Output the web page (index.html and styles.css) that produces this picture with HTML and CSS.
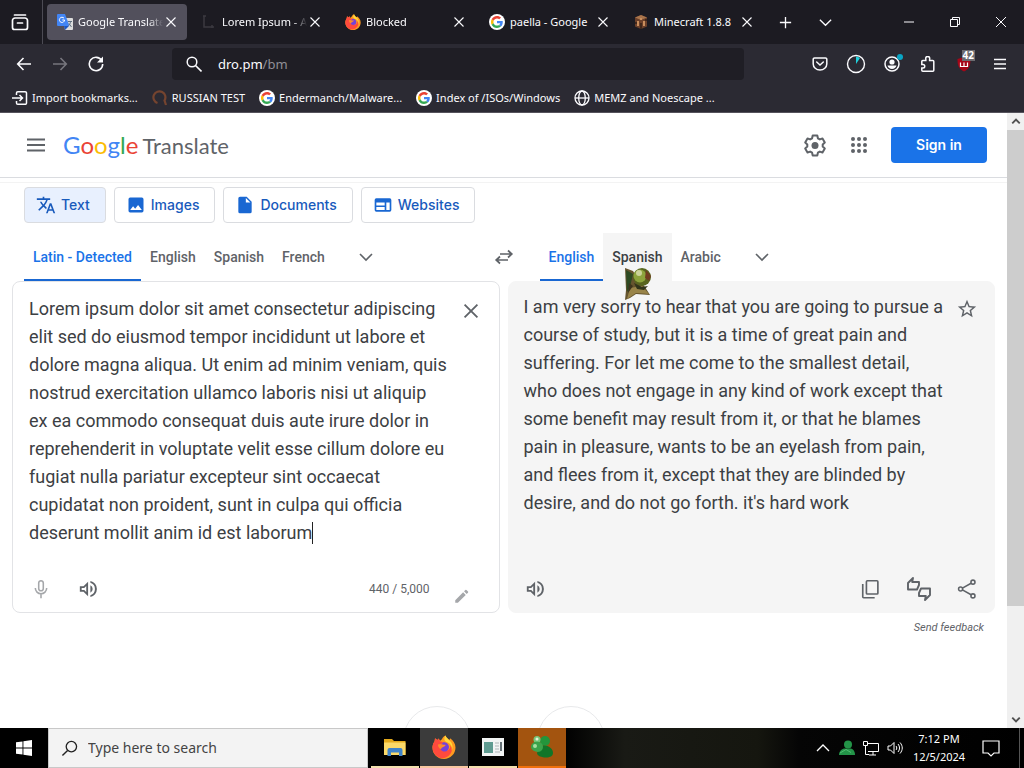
FILE: index.html
```html
<!DOCTYPE html>
<html lang="en">
<head>
<meta charset="utf-8">
<meta name="viewport" content="width=device-width, initial-scale=1">
<title>Google Translate</title>
<link rel="stylesheet" href="styles.css">
</head>
<body>
<svg class="sprite" aria-hidden="true">
  <symbol id="close" viewBox="0 0 16 16"><path d="M3.5 3.5l9 9M12.5 3.5l-9 9" fill="none" stroke="currentColor" stroke-width="1.1"/></symbol>
  <symbol id="chev" viewBox="0 0 16 16"><path d="M2 5l6 6 6-6" fill="none" stroke="currentColor" stroke-width="1.6"/></symbol>
  <symbol id="arrow" viewBox="0 0 16 16"><path d="M2 5l6 6 6-6" fill="none" stroke="currentColor" stroke-width="3"/></symbol>
  <symbol id="google" viewBox="0 0 48 48"><circle cx="24" cy="24" r="24" fill="#fff"/><g transform="translate(6 6) scale(.75)"><path fill="#EA4335" d="M24 9.5c3.54 0 6.71 1.22 9.21 3.6l6.85-6.85C35.9 2.38 30.47 0 24 0 14.62 0 6.51 5.38 2.56 13.22l7.98 6.19C12.43 13.72 17.74 9.5 24 9.5z"/><path fill="#4285F4" d="M46.98 24.55c0-1.57-.15-3.09-.38-4.55H24v9.02h12.94c-.58 2.96-2.26 5.48-4.78 7.18l7.73 6c4.51-4.18 7.09-10.36 7.09-17.65z"/><path fill="#FBBC05" d="M10.53 28.59c-.48-1.45-.76-2.99-.76-4.59s.27-3.14.76-4.59l-7.98-6.19C.92 16.46 0 20.12 0 24c0 3.88.92 7.54 2.56 10.78l7.97-6.19z"/><path fill="#34A853" d="M24 48c6.48 0 11.93-2.13 15.89-5.81l-7.73-6c-2.15 1.45-4.92 2.3-8.16 2.3-6.26 0-11.57-4.22-13.47-9.91l-7.98 6.19C6.51 42.62 14.62 48 24 48z"/></g></symbol>
  <symbol id="firefox" viewBox="0 0 24 24"><path fill="#ff9a1f" d="M13.6.4c.5 2.2 2.3 3.2 3.5 4.6 1-.6.9-1.800.9-1.800 3.200 2 5.500 5.400 5.500 9.400C23.500 18.900 18.400 24 12 24S.5 18.900.5 12.700c0-2.500.8-4.700 2.100-6.500l.4-3 2.300 1.900 1.500-1.600.9 2.100c2.600-.4 2.400-4 5.900-5.200z"/><path fill="#ff4a3d" d="M.5 12C1 8 2.600 6.700 2.600 6.200L3 3.200l2.300 1.900 1.500-1.600 1 2.800 3.400.9-3.400 3.100c.2 4.500 3.600 6.500 7 5.500 2.600-.8 3.800-3 3.600-5.200 2 2 2 5.400.1 8.100C15.500 23 10 24.500 6 22 2.300 20 .3 16 .5 12z"/><path fill="#ffd83b" d="M13.600.4c.5 2.200 2.300 3.200 3.500 4.600 3.300 3 4.300 6.600 2.700 10.400.4-3.900-.8-6.600-4-7.800-2-.8-3.400-1.700-3.400-3.600 0-1.500.5-2.800 1.200-3.600z"/><path fill="#7542d8" d="M7.800 10.300c.7-1.200 2.400-1.500 3.400-3.100 3.200-.4 5.800 1.900 5.800 4.900 0 2.600-1.900 4.500-4.500 4.500-3 0-4.900-2.700-4.700-6.300z"/><path fill="#ff8a2b" d="M6 9.500c2-1 3.300-.6 4.900.1 1 .4 2 .1 2.700.3-.6 1.500-2.100 1.800-3.300 2.600-.5.400-1.200.9-1.300 1.800C7 13.500 5.800 11.500 6 9.500z"/></symbol>
  <symbol id="speaker" viewBox="0 0 24 24"><path fill="currentColor" fill-rule="evenodd" d="M2 9v6h4l5 5V4L6 9H2zm7-.2v6.400L6.800 13H4v-2h2.800L9 8.800zM16 12a4.500 4.500 0 0 0-2.500-4v8a4.500 4.500 0 0 0 2.500-4zm-2.500-8.800v2.100a7 7 0 0 1 0 13.400v2.100a9 9 0 0 0 0-17.600z"/></symbol>
</svg>

<div class="chrome">
  <div class="tabbar">
    <button class="cbtn history" aria-label="Recent browsing"><svg viewBox="0 0 18 18"><path d="M3.500 2h11M1.500 7.500v7a2 2 0 0 0 2 2h11a2 2 0 0 0 2-2v-7A2.500 2.500 0 0 0 14 5H4a2.500 2.500 0 0 0-2.500 2.500zM6.500 10h5" fill="none" stroke="currentColor" stroke-width="1.700" stroke-linecap="round"/></svg></button>
    <div class="tabs">
      <div class="tab active"><svg class="fav" viewBox="0 0 16 16"><path d="M6 4h9a1 1 0 0 1 1 1v10a1 1 0 0 1-1 1H8z" fill="#dcdcdc"/><path d="M1 0h7l4.500 12H1a1 1 0 0 1-1-1V1a1 1 0 0 1 1-1z" fill="#4285f4"/><path d="M8 16l4-4H7z" fill="#1a56c4"/><path d="M7 4.200A2.600 2.600 0 1 0 7.600 6H5.300" fill="none" stroke="#fff" stroke-width="1"/><path d="M11 7.500h4M13.500 7.500c0 2-1 3-2 4M12 9.500l2.500 3.500" fill="none" stroke="#607080"/></svg><span class="title">Google Translate</span><button aria-label="Close Google Translate"><svg><use href="#close"/></svg></button></div>
      <div class="tab"><svg class="fav" viewBox="0 0 16 16"><path d="M3 2v11h10M2 2h3M11 11v3" fill="none" stroke="#3b3a40" stroke-width="1.500"/></svg><span class="title">Lorem Ipsum - All</span><button aria-label="Close Lorem Ipsum"><svg><use href="#close"/></svg></button></div>
      <div class="tab"><svg class="fav"><use href="#firefox"/></svg><span class="title">Blocked</span><button aria-label="Close Blocked"><svg><use href="#close"/></svg></button></div>
      <div class="tab"><svg class="fav"><use href="#google"/></svg><span class="title plain">paella - Google</span><button aria-label="Close paella"><svg><use href="#close"/></svg></button></div>
      <div class="tab"><svg class="fav" viewBox="0 0 16 16"><path d="M8 1l6 2.500v9L8 15l-6-2.500v-9z" fill="#6b402a"/><path d="M8 1l6 2.500L8 6 2 3.500z" fill="#a9754c"/><path d="M4 7h2v5H4zM10 7h2v5h-2zM7 4h2v2H7z" fill="#c98e5d"/><path d="M2 8h2v2H2zM7 9h2v6H7zM12 5h2v2h-2z" fill="#40271b"/></svg><span class="title plain">Minecraft 1.8.8</span><button aria-label="Close Minecraft"><svg><use href="#close"/></svg></button></div>
    </div>
    <button class="cbtn" aria-label="New tab"><svg viewBox="0 0 16 16"><path d="M8 2v12M2 8h12" stroke="currentColor" stroke-width="1.400"/></svg></button>
    <button class="cbtn" aria-label="List all tabs"><svg viewBox="0 0 16 16"><path d="M2 5l6 6 6-6" fill="none" stroke="currentColor" stroke-width="1.400"/></svg></button>
    <div class="winctl">
      <button aria-label="Minimize"><svg viewBox="0 0 12 12"><path d="M1 6h10" stroke="currentColor"/></svg></button>
      <button aria-label="Restore"><svg viewBox="0 0 12 12"><path d="M1.500 3.500h7v7h-7zM3.500 3V1.500h7v7H9" fill="none" stroke="currentColor"/></svg></button>
      <button aria-label="Close"><svg viewBox="0 0 12 12"><path d="M1 1l10 10M11 1L1 11" stroke="currentColor"/></svg></button>
    </div>
  </div>

  <div class="navbar">
    <div class="navleft">
      <button class="nbtn" aria-label="Back"><svg viewBox="0 0 16 16"><path d="M15 8H2M7.500 2L1.700 8l5.800 6" fill="none" stroke="currentColor" stroke-width="1.600"/></svg></button>
      <button class="nbtn off" aria-label="Forward" disabled><svg viewBox="0 0 16 16"><path d="M1 8h13M8.500 2l5.800 6-5.800 6" fill="none" stroke="currentColor" stroke-width="1.600"/></svg></button>
      <button class="nbtn" aria-label="Reload"><svg viewBox="0 0 16 16"><path d="M13.700 4.500A6.700 6.700 0 1 0 14.700 8" fill="none" stroke="currentColor" stroke-width="1.600"/><path d="M15 .5V6.500H9z" fill="currentColor"/></svg></button>
    </div>
    <div class="urlbar"><svg viewBox="0 0 16 16"><circle cx="6" cy="6" r="4.800" fill="none" stroke="currentColor" stroke-width="1.500"/><path d="M9.500 9.500l6 6" stroke="currentColor" stroke-width="1.600"/></svg><a href="#bm">dro.pm<span>/bm</span></a></div>
    <div class="navright">
      <button class="nbtn" aria-label="Save to Pocket"><svg viewBox="0 0 16 16"><path d="M2.500 2h11A1.300 1.300 0 0 1 14.800 3.300V8A6.800 6 0 0 1 1.200 8V3.300A1.300 1.300 0 0 1 2.500 2zM4.700 6L8 9l3.300-3" fill="none" stroke="currentColor" stroke-width="1.500" stroke-linecap="round"/></svg></button>
      <button class="nbtn wide" aria-label="Timer"><svg viewBox="0 0 20 20"><circle cx="10" cy="10" r="8.500" fill="none" stroke="currentColor" stroke-width="1.400"/><path d="M10 10V2.500a7 7 0 0 1 4 1.500z" fill="#20d0dc"/></svg></button>
      <button class="nbtn" aria-label="Account"><svg viewBox="0 0 16 16"><circle cx="8" cy="8" r="7" fill="none" stroke="currentColor" stroke-width="1.500"/><circle cx="8" cy="6" r="2.600" fill="currentColor"/><path d="M3.500 9.500h9c-.5 2-2.300 3.500-4.500 3.500S4 11.500 3.500 9.500z" fill="currentColor"/></svg><i class="dot"></i></button>
      <button class="nbtn" aria-label="Extensions"><svg viewBox="0 0 16 16"><path d="M1.800 8.500V5.500a1 1 0 0 1 1-1h3V3a2 2 0 1 1 3.800 0v1.500h3.200a1 1 0 0 1 1 1v8.700a1 1 0 0 1-1 1H2.800a1 1 0 0 1-1-1V12H3a1.700 1.700 0 0 0 0-3.500z" fill="none" stroke="currentColor" stroke-width="1.500"/></svg></button>
      <button class="nbtn" aria-label="Ad blocker, 42 blocked"><svg viewBox="0 0 16 16"><path d="M8 1l6.500 2c0 6-1 10-6.500 12.500C2.500 13 1.500 9 1.500 3z" fill="#a50618"/><path d="M4.500 6.500v4h7v-4M8 6.500v4" fill="none" stroke="#fff" stroke-width="1.200"/></svg><span class="badge">42</span></button>
      <button class="nbtn" aria-label="Application menu"><svg viewBox="0 0 16 16"><path d="M2 3.500h12M2 8h12M2 12.500h12" stroke="currentColor" stroke-width="1.400"/></svg></button>
    </div>
  </div>

  <nav class="bookmarks">
    <a href="#b1"><svg viewBox="0 0 16 16"><path d="M4.500 5V3a1.300 1.300 0 0 1 1.300-1.300h7.400A1.300 1.300 0 0 1 14.500 3v10a1.300 1.300 0 0 1-1.300 1.300H5.800A1.300 1.300 0 0 1 4.500 13v-2M0 8h10M7.500 5l3 3-3 3" fill="none" stroke="currentColor" stroke-width="1.500"/></svg>Import bookmarks...</a>
    <a href="#b2"><svg viewBox="0 0 16 16"><path d="M5.500 13A6 6 0 1 1 12.500 10.500L14 15" fill="none" stroke="#75442f" stroke-width="2.200"/></svg>RUSSIAN TEST</a>
    <a href="#b3"><svg><use href="#google"/></svg>Endermanch/Malware...</a>
    <a href="#b4"><svg><use href="#google"/></svg>Index of /ISOs/Windows</a>
    <a href="#b5"><svg viewBox="0 0 16 16"><g fill="none" stroke="currentColor" stroke-width="1.300"><circle cx="8" cy="8" r="7"/><ellipse cx="8" cy="8" rx="3.300" ry="7"/><path d="M1 8h14"/></g></svg>MEMZ and Noescape ...</a>
  </nav>
</div>

<div class="viewport">
  <div class="page">
    <header class="header">
      <button class="ibtn" aria-label="Main menu"><svg viewBox="0 0 24 24"><path d="M3 6.500h18M3 12h18M3 17.500h18" stroke="currentColor" stroke-width="2"/></svg></button>
      <a class="logo" href="#home"><span class="g"><b class="bl">G</b><b class="rd">o</b><b class="yl">o</b><b class="bl">g</b><b class="gr">l</b><b class="rd">e</b></span><span>Translate</span></a>
      <div class="actions">
        <button class="ibtn" aria-label="Settings"><svg viewBox="0 0 24 24"><path d="M9.700 2.500h4.600l.6 2.800 1.900 1.100 2.700-.9 2.300 4-2.100 1.900v2.200l2.100 1.900-2.300 4-2.700-.9-1.900 1.100-.6 2.800H9.700l-.6-2.800-1.900-1.100-2.700.9-2.300-4 2.100-1.900v-2.200L2.200 9.500l2.300-4 2.700.9 1.900-1.100z" fill="none" stroke="currentColor" stroke-width="2" stroke-linejoin="round"/><circle cx="12" cy="12.500" r="3.500" fill="currentColor"/></svg></button>
        <button class="ibtn" aria-label="Google apps"><svg viewBox="0 0 24 24"><g fill="currentColor"><circle cx="6" cy="6" r="2"/><circle cx="12" cy="6" r="2"/><circle cx="18" cy="6" r="2"/><circle cx="6" cy="12" r="2"/><circle cx="12" cy="12" r="2"/><circle cx="18" cy="12" r="2"/><circle cx="6" cy="18" r="2"/><circle cx="12" cy="18" r="2"/><circle cx="18" cy="18" r="2"/></g></svg></button>
        <button class="signin">Sign in</button>
      </div>
    </header>

    <main class="main">
      <nav class="modes">
        <button class="on"><svg viewBox="0 0 24 24"><path fill="currentColor" d="M12.870 15.070l-2.540-2.510.03-.03A17.520 17.520 0 0 0 14.070 6H17V4h-7V2H8v2H1v2h11.170C11.500 7.920 10.440 9.750 9 11.350 8.070 10.320 7.300 9.190 6.690 8h-2c.73 1.630 1.730 3.170 2.980 4.560l-5.090 5.020L4 19l5-5 3.110 3.110.76-2.040zM18.500 10h-2L12 22h2l1.120-3h4.750L21 22h2l-4.500-12zm-2.620 7l1.620-4.330L19.120 17h-3.240z"/></svg>Text</button>
        <button><svg viewBox="0 0 24 24"><path fill="#1967d2" d="M21 19V5a2 2 0 0 0-2-2H5a2 2 0 0 0-2 2v14a2 2 0 0 0 2 2h14a2 2 0 0 0 2-2zM8.500 13.500l2.500 3.010L14.500 12l4.500 6H5l3.500-4.500z"/></svg>Images</button>
        <button><svg viewBox="0 0 24 24"><path fill="#1967d2" d="M6 2a2 2 0 0 0-2 2v16a2 2 0 0 0 2 2h12a2 2 0 0 0 2-2V8l-6-6H6zm7 7V3.500L18.500 9H13z"/></svg>Documents</button>
        <button><svg viewBox="0 0 24 24"><path fill="#1967d2" d="M20 4H4a2 2 0 0 0-2 2v12a2 2 0 0 0 2 2h16a2 2 0 0 0 2-2V6a2 2 0 0 0-2-2zm-6 14H4v-3.500h10V18zm0-5.500H4V9h10v3.500zm6 5.500h-4V9h4v9z"/></svg>Websites</button>
      </nav>

      <div class="langs">
        <div class="lang-group">
          <button class="lang on">Latin - Detected</button><button class="lang">English</button><button class="lang">Spanish</button><button class="lang">French</button>
          <button class="more" aria-label="More source languages"><svg><use href="#chev"/></svg></button>
        </div>
        <button class="swap" aria-label="Swap languages"><svg viewBox="0 0 20 20"><path d="M6 7h11.500M14 3.500L17.800 7 14 10.500M14 13H2.500M6 9.500L2.200 13 6 16.500" fill="none" stroke="currentColor" stroke-width="1.700"/></svg></button>
        <div class="lang-group">
          <button class="lang on">English</button><button class="lang hover">Spanish<svg class="cursor" viewBox="0 0 28 34"><path d="M1 2l8 3 5 8 7 8 5 8-14-1-6 4-5 2 1-10z" fill="#65542e"/><path d="M2 4l7 4-3 13-3 5z" fill="#2d4a22"/><path d="M6 22l12-2 7 8-13-1-9 6z" fill="#998449"/><path d="M5 17l4 3-5 7z" fill="#3d351d"/><circle cx="18" cy="11" r="9" fill="#58651f"/><circle cx="16" cy="10" r="6.500" fill="#8da43c"/><circle cx="15" cy="7" r="3" fill="#ccd49b"/><path d="M22 4l5 6-2 5-4-3z" fill="#713e20"/><path d="M10 17l8 4 6-1-4 4-7-1z" fill="#31351a"/></svg></button><button class="lang">Arabic</button>
          <button class="more" aria-label="More target languages"><svg><use href="#chev"/></svg></button>
        </div>
      </div>

      <div class="panels">
        <section class="panel source">
          <div class="top">
            <textarea aria-label="Source text" spellcheck="false">Lorem ipsum dolor sit amet consectetur adipiscing elit sed do eiusmod tempor incididunt ut labore et dolore magna aliqua. Ut enim ad minim veniam, quis nostrud exercitation ullamco laboris nisi ut aliquip ex ea commodo consequat duis aute irure dolor in reprehenderit in voluptate velit esse cillum dolore eu fugiat nulla pariatur excepteur sint occaecat cupidatat non proident, sunt in culpa qui officia deserunt mollit anim id est laborum</textarea>
            <i class="caret"></i>
            <button class="pbtn" aria-label="Clear source text"><svg viewBox="0 0 24 24"><path d="M5 5l14 14M19 5L5 19" stroke="currentColor" stroke-width="2"/></svg></button>
          </div>
          <div class="tools">
            <button class="pbtn dim" aria-label="Translate by voice"><svg viewBox="0 0 24 24"><path d="M12 3a2.500 2.500 0 0 0-2.500 2.500v6a2.500 2.500 0 0 0 5 0v-6A2.500 2.500 0 0 0 12 3zM5.800 11a6.200 6.200 0 0 0 12.400 0M12 17.500V22" fill="none" stroke="currentColor" stroke-width="1.700"/></svg></button>
            <button class="pbtn" aria-label="Listen to source text"><svg><use href="#speaker"/></svg></button>
            <span class="count">440 / 5,000</span>
            <button class="pbtn dim pencil" aria-label="Input tools"><svg viewBox="0 0 24 24"><path fill="currentColor" d="M3 17.500V21h3.500L17 10.500 13.500 7 3 17.500zM20 7.500a1 1 0 0 0 0-1.400L17.900 4a1 1 0 0 0-1.400 0l-1.800 1.800 3.500 3.500L20 7.500z"/></svg></button>
          </div>
        </section>
        <section class="panel target">
          <div class="top">
            <p>I am very sorry to hear that you are going to pursue a course of study, but it is a time of great pain and suffering. For let me come to the smallest detail, who does not engage in any kind of work except that some benefit may result from it, or that he blames pain in pleasure, wants to be an eyelash from pain, and flees from it, except that they are blinded by desire, and do not go forth. it's hard work</p>
            <button class="pbtn" aria-label="Save translation"><svg viewBox="0 0 24 24"><path fill="currentColor" d="M22 9.240l-7.190-.62L12 2 9.190 8.630 2 9.240l5.460 4.730L5.820 21 12 17.270 18.180 21l-1.630-7.030L22 9.240zM12 15.400l-3.760 2.270 1-4.280-3.320-2.880 4.380-.38L12 6.100l1.710 4.040 4.380.38-3.320 2.880 1 4.280L12 15.400z"/></svg></button>
          </div>
          <div class="tools">
            <button class="pbtn" aria-label="Listen to translation"><svg><use href="#speaker"/></svg></button>
            <div class="right">
              <button class="pbtn" aria-label="Copy translation"><svg viewBox="0 0 24 24"><path d="M8 3h10.500a1 1 0 0 1 1 1v12.500a1 1 0 0 1-1 1H8a1 1 0 0 1-1-1V4a1 1 0 0 1 1-1zM3 6.500V20.500a1 1 0 0 0 1 1h12" fill="none" stroke="currentColor" stroke-width="1.800"/></svg></button>
              <button class="pbtn big" aria-label="Rate translation"><svg viewBox="0 0 28 28"><g fill="none" stroke="currentColor" stroke-width="1.900" stroke-linejoin="round"><path d="M3 8l5-5-.8 4H14v3l-2 4.500H3zM25 20l-5 5 .8-4H14v-3l2-4.500h9z"/></g></svg></button>
              <button class="pbtn" aria-label="Share translation"><svg viewBox="0 0 24 24"><g fill="none" stroke="currentColor" stroke-width="1.700"><circle cx="5" cy="12" r="2.200"/><circle cx="18.500" cy="4.500" r="2.200"/><circle cx="18.500" cy="19.500" r="2.200"/><path d="M7 11l9.500-5.300M7 13l9.500 5.300"/></g></svg></button>
            </div>
          </div>
        </section>
      </div>
      <a class="feedback" href="#feedback">Send feedback</a>
      <div class="rounds"><span></span><span></span></div>
    </main>
  </div>
  <div class="scroll" aria-hidden="true">
    <svg class="up"><use href="#arrow"/></svg>
    <div class="track"><div class="thumb"></div></div>
    <svg><use href="#arrow"/></svg>
  </div>
</div>

<footer class="taskbar">
  <button class="start" aria-label="Start"><svg viewBox="0 0 16 16"><path fill="#fff" d="M0 2.300l6.500-.9v6.100H0zM7.400 1.200L16 0v7.500H7.400zM0 8.400h6.500v6.200L0 13.700zM7.400 8.400H16V16l-8.600-1.200z"/></svg></button>
  <label class="search"><svg viewBox="0 0 18 18"><circle cx="11" cy="7" r="5.500" fill="none" stroke="currentColor" stroke-width="1.400"/><path d="M7 11l-5.500 5.500" stroke="currentColor" stroke-width="1.500"/></svg><input type="text" placeholder="Type here to search" aria-label="Type here to search"></label>
  <div class="apps">
    <button aria-label="File Explorer"><svg viewBox="0 0 24 24"><path d="M1 4h8l2 2h11.500v14H1z" fill="#e3a91c"/><path d="M1 7.500h21.500V20H1z" fill="#fbd968"/><path d="M4.500 21v-6a2 2 0 0 1 2-2h11a2 2 0 0 1 2 2v6h-3.500v-3.500H8V21z" fill="#3f83c9"/></svg></button>
    <button class="current" aria-label="Firefox"><svg><use href="#firefox"/></svg></button>
    <button aria-label="Viewer"><svg viewBox="0 0 24 24"><path d="M1 3h22v18H1z" fill="#f1f4f4"/><path d="M3 7h9v11H3z" fill="#5e9b91"/><path d="M14 8h4M14 11h4M14 14h4M14 17h5" stroke="#adb6b8"/><path d="M20 7v9" stroke="#35454d" stroke-width="1.500"/></svg></button>
    <button class="alert" aria-label="Messenger"><svg viewBox="0 0 24 24"><circle cx="15" cy="6" r="5" fill="#23953b"/><path d="M10 11c7-2 13 2 13 7 0 3-3 4.500-7 4.500S7 21 7 18z" fill="#117528"/><circle cx="7" cy="4.500" r="3.500" fill="#77c77a"/><path d="M1 12c0-4 4-6 8-5s5 5 3 8c-3 4-11 1-11-3z" fill="#3ba34b"/><circle cx="7" cy="4" r="1.500" fill="#e4f3dc"/><circle cx="5" cy="11" r="2" fill="#a6dfa0"/></svg></button>
  </div>
  <div class="tray">
    <svg class="up" viewBox="0 0 16 16"><path d="M2 5l6 6 6-6" fill="none" stroke="currentColor" stroke-width="1.300"/></svg>
    <svg viewBox="0 0 16 16"><circle cx="9" cy="4.500" r="4" fill="#239448"/><path d="M0 15c0-4 3-6.500 6-6.500h5c3 0 5 2.500 5 6.500z" fill="#239448"/><path d="M1 13l6-3.500 5 3" stroke="#52bd72" fill="none"/></svg>
    <svg viewBox="0 0 16 16"><path d="M5 3.500h10.500v8H5M10 11.500V15M6 15h7M.5 1.500h4v4h-4zM2.500 5.500v9H6" fill="none" stroke="currentColor"/></svg>
    <svg viewBox="0 0 16 16"><path d="M1 6h2.500L7 2.500v11L3.500 10H1zM9 6c1 1 1 3 0 4M11 4c2 2.500 2 5.500 0 8M13 2.500c3 3.500 3 7.500 0 11" fill="none" stroke="currentColor"/></svg>
    <div class="clock"><span>7:12 PM</span><span>12/5/2024</span></div>
    <button class="note" aria-label="Notifications"><svg viewBox="0 0 18 18"><path d="M1 2h16v12h-5l-3 3-3-3H1z" fill="none" stroke="currentColor" stroke-width="1.200"/></svg></button>
    <i class="desk"></i>
  </div>
</footer>
</body>
</html>
```
FILE: styles.css
```css
* { box-sizing: border-box; }
body { margin: 0; height: 100vh; display: flex; flex-direction: column; overflow: hidden; background: #fff; font-family: Roboto, "Liberation Sans", sans-serif; }
button { border: 0; background: none; padding: 0; margin: 0; font: inherit; color: inherit; display: flex; align-items: center; justify-content: center; }
a { color: inherit; text-decoration: none; }
svg { display: block; flex: none; }
.sprite { position: absolute; width: 0; height: 0; }
.up { transform: rotate(180deg); }

.chrome { background: #2b2a33; color: #fbfbfe; font: 11px/18px "Noto Sans", "Open Sans", sans-serif; border-bottom: 1px solid #55535c; }
.tabbar { display: flex; align-items: center; height: 44px; background: #1c1b22; }
.cbtn { width: 40px; height: 36px; }
.cbtn svg { width: 15px; height: 15px; }
.history { width: 43px; height: 44px; padding-right: 3px; border-right: 1px solid #4c4b54; }
.history svg { width: 18px; height: 18px; }
.tabs { display: flex; gap: 4px; padding: 0 2px 0 4px; }
.tab { width: 140px; height: 36px; border-radius: 4px; padding: 0 8px 0 10px; display: flex; align-items: center; }
.tab.active { background: #52505c; }
.fav { width: 16px; height: 16px; margin-right: 5px; }
.title { flex: 1; min-width: 0; overflow: hidden; white-space: nowrap; mask-image: linear-gradient(to left, transparent, #000 14px); }
.title.plain { mask-image: none; }
.tab button svg { width: 16px; height: 16px; }
.winctl { display: flex; margin-left: auto; }
.winctl button { width: 46px; height: 44px; }
.winctl svg { width: 12px; height: 12px; }

.navbar { display: flex; align-items: center; height: 40px; }
.navleft { display: flex; padding-left: 6px; width: 172px; }
.nbtn { position: relative; width: 36px; height: 36px; }
.nbtn svg { width: 16px; height: 16px; }
.nbtn.wide svg { width: 20px; height: 20px; }
.nbtn.off { color: #77767e; }
.urlbar { flex: 1; display: flex; align-items: center; gap: 16px; height: 32px; padding-left: 14px; border-radius: 4px; background: #1f1e25; font-size: 13px; }
.urlbar svg { width: 16px; height: 16px; }
.urlbar span { color: #8f8e96; }
.navright { display: flex; padding: 0 6px 0 58px; }
.dot { position: absolute; right: 7px; top: 8px; width: 6px; height: 6px; border-radius: 50%; background: #0aa5c5; }
.badge { position: absolute; right: 7px; top: 4px; padding: 0 1px; background: #6b6b70; color: #fff; font-size: 10px; line-height: 11px; font-weight: 700; }

.bookmarks { display: flex; align-items: center; gap: 14px; height: 28px; padding-left: 12px; white-space: nowrap; }
.bookmarks a { display: flex; align-items: center; gap: 4px; }
.bookmarks svg { width: 16px; height: 16px; }

.viewport { flex: 1; min-height: 0; display: flex; }
.page { flex: 1; min-width: 0; overflow: hidden; display: flex; flex-direction: column; color: #5f6368; }
.header { display: flex; align-items: center; height: 65px; flex: none; padding: 0 20px; border-bottom: 1px solid #dadce0; }
.ibtn { width: 32px; height: 40px; }
.ibtn svg { width: 24px; height: 24px; }
.logo { display: flex; align-items: baseline; gap: 4px; margin-left: 11px; font: 22px/28px Lato, Roboto, sans-serif; }
.logo .g { font-size: 24px; }
.logo b { font-weight: 400; }
.bl { color: #4285f4; }
.rd { color: #ea4335; }
.yl { color: #fbbc05; }
.gr { color: #34a853; }
.actions { display: flex; align-items: center; gap: 12px; margin-left: auto; }
.signin { width: 96px; height: 36px; margin-left: 4px; border-radius: 4px; background: #1a73e8; color: #fff; font: 600 14px/20px Inter, sans-serif; }

.main { position: relative; flex: 1; min-height: 0; overflow: hidden; margin-top: 4px; border-top: 1px solid #f3f3f3; padding: 4px 12px 0; }
.modes { display: flex; gap: 8px; padding-left: 12px; }
.modes button { height: 36px; padding: 0 15px 0 11px; gap: 5px; border: 1px solid #dadce0; border-radius: 4px; color: #185abc; font: 500 14px/20px Inter, sans-serif; }
.modes .on { background: #e8f0fe; }
.modes svg { width: 20px; height: 20px; }
.langs { display: grid; grid-template-columns: 1fr 48px 1fr; margin-top: 10px; }
.lang-group { display: flex; padding-left: 12px; }
.lang { position: relative; height: 48px; padding: 2px 9px 0; border-bottom: 2px solid transparent; font: 500 14px/20px Roboto, sans-serif; }
.lang.on { color: #1a73e8; border-color: #1967d2; }
.lang.hover { background: #f5f5f5; color: #3c4043; }
.cursor { position: absolute; left: 21px; top: 33px; z-index: 2; width: 28px; height: 34px; }
.more { width: 48px; height: 48px; margin-left: 8px; }
.more svg { width: 16px; height: 16px; }
.swap svg { width: 20px; height: 20px; }
.panels { display: grid; grid-template-columns: 1fr 1fr; gap: 8px; }
.panel { min-height: 332px; border: 1px solid #e2e3e6; border-radius: 8px; display: flex; flex-direction: column; color: #3c4043; }
.target { background: #f5f5f5; border-color: #f5f5f5; }
.top { position: relative; flex: 1; display: flex; align-items: flex-start; justify-content: space-between; padding: 13px 12px 0 16px; }
.target .top { padding: 11px 11px 0 15px; }
textarea, .top p { font: 18px/28px Roboto, sans-serif; color: #3c4043; }
textarea { flex: 1; height: 264px; padding: 0 6px 0 0; border: 0; outline: 0; resize: none; overflow: hidden; background: none; }
.top p { flex: 1; margin: 0; padding-right: 8px; }
.caret { position: absolute; left: 299px; top: 240px; width: 1px; height: 22px; background: #222; }
.pbtn { width: 32px; height: 32px; color: #5f6368; }
.pbtn svg { width: 22px; height: 22px; }
.pbtn.big svg { width: 28px; height: 28px; }
.pbtn.dim { color: #a5a7aa; }
.tools { display: flex; align-items: center; gap: 16px; height: 46px; padding: 0 21px 0 12px; }
.target .tools { padding: 0 11px; }
.right { display: flex; gap: 16px; margin-left: auto; }
.count { margin-left: auto; font-size: 12px; color: #5f6368; }
.pencil { align-items: flex-end; }
.pencil svg { width: 18px; height: 18px; }
.feedback { display: block; margin: 8px 11px 0 0; text-align: right; font: italic 11px/14px Roboto, sans-serif; }
.rounds { display: flex; justify-content: center; gap: 66px; margin-top: 71px; }
.rounds span { width: 68px; height: 68px; border: 1px solid #e8e9eb; border-radius: 50%; }
.scroll { width: 17px; display: flex; flex-direction: column; align-items: center; background: #f0f0f0; color: #505050; }
.scroll svg { width: 10px; height: 17px; }
.track { flex: 1; width: 100%; }
.thumb { height: 82%; background: #cdcdcd; }

.taskbar { display: flex; height: 40px; flex: none; color: #fff; background: linear-gradient(90deg, #000 55%, #191a15 61%, #15160f 74%, #050505 78%, #000); }
.start { width: 48px; }
.start svg { width: 16px; height: 16px; }
.search { display: flex; align-items: center; gap: 10px; width: 320px; padding-left: 12px; background: #f3f3f3; border: 1px solid #c8c8c8; color: #222; }
.search svg { width: 17px; height: 17px; }
.search input { flex: 1; min-width: 0; padding: 0; border: 0; outline: 0; background: none; font: 14px/22px "Noto Sans", "Open Sans", sans-serif; }
.search input::placeholder { color: #444; opacity: 1; }
.apps { display: flex; gap: 1px; padding-left: 3px; }
.apps button { width: 48px; height: 40px; border-bottom: 2px solid #f3dfae; }
.apps svg { width: 24px; height: 24px; }
.apps .current { background: #3b3b3b; border-color: #f9c7a0; }
.apps .alert { background: #a3540f; border-color: #f0700c; }
.tray { display: flex; align-items: center; gap: 8px; margin-left: auto; }
.tray svg { width: 16px; height: 16px; }
.clock { display: flex; flex-direction: column; width: 56px; text-align: center; white-space: nowrap; font: 11px/18px "Noto Sans", "Open Sans", sans-serif; }
.note { width: 32px; margin-right: 4px; }
.tray .note svg { width: 18px; height: 18px; }
.desk { width: 5px; height: 40px; border-left: 1px solid #555; }
```
